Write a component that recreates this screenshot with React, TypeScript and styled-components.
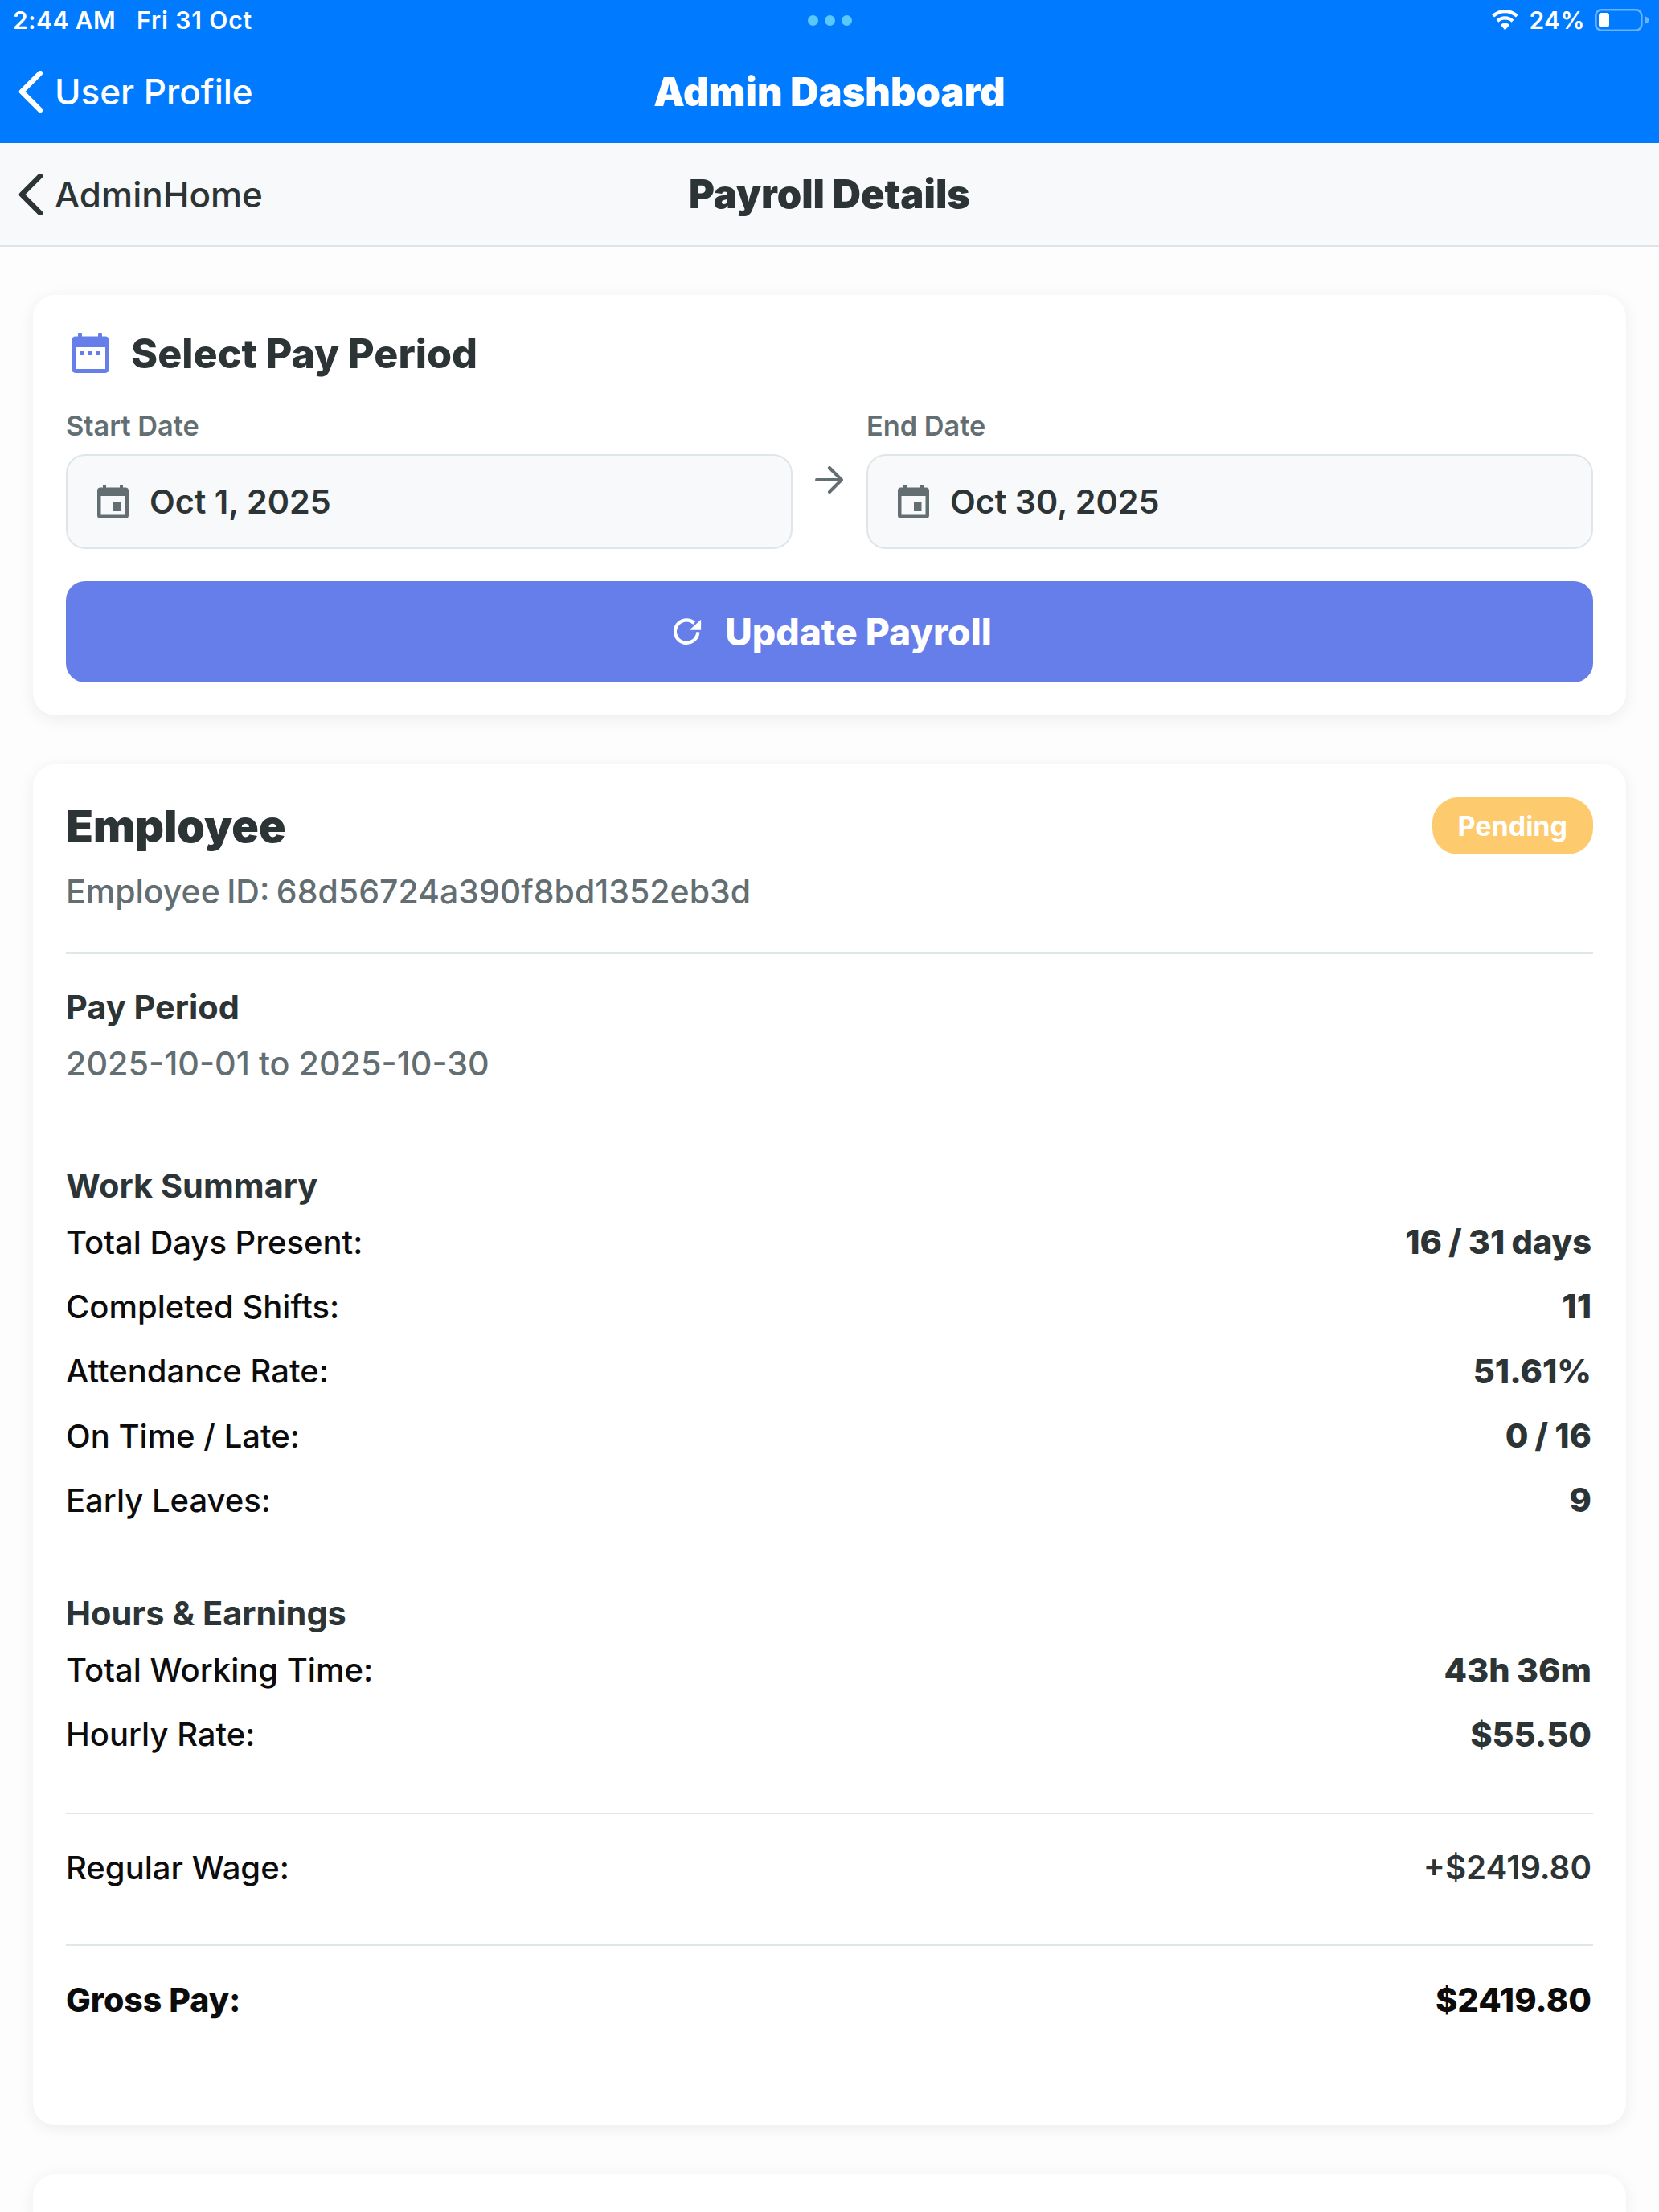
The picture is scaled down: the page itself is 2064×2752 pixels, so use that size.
import React from "react";
import styled, { createGlobalStyle } from "styled-components";

const Global = createGlobalStyle`
  html, body { margin: 0; padding: 0; background: #fdfdfd; }
  body { font-family: Inter, "Liberation Sans", sans-serif; -webkit-font-smoothing: antialiased; }
`;

const Page = styled.div`
  width: 2064px;
  height: 2752px;
  overflow: hidden;
  background: #fdfdfd;
`;

const BlueHeader = styled.header`
  background: #007aff;
  height: 178px;
  color: #fff;
`;

const StatusBar = styled.div`
  height: 50px;
  display: grid;
  grid-template-columns: 1fr auto 1fr;
  align-items: center;
  padding: 0 12px 0 16px;
  font-size: 30px;
  font-weight: 600;
  letter-spacing: 0.4px;
`;

const StatusLeft = styled.div`
  display: flex;
  gap: 26px;
`;

const StatusDate = styled.span`
  letter-spacing: 0.9px;
`;

const Dots = styled.div`
  display: flex;
  gap: 8px;
  margin-right: 4px;
`;

const Dot = styled.span`
  width: 13px;
  height: 13px;
  border-radius: 50%;
  background: #5ac8fa;
`;

const StatusRight = styled.div`
  display: flex;
  justify-content: flex-end;
  align-items: center;
  gap: 12px;
`;

const NavRow = styled.div<{ $h: number }>`
  height: ${(p) => p.$h}px;
  display: grid;
  grid-template-columns: 1fr auto 1fr;
  align-items: center;
  padding: 0 22px;
`;

const SubNav = styled.nav`
  background: #f8f9fa;
  border-bottom: 2px solid #e2e3e5;
  color: #2d3436;
`;

const Back = styled.div`
  display: flex;
  align-items: center;
  gap: 14px;
  font-size: 44px;
  font-weight: 500;
`;

const NavTitle = styled.div`
  font-size: 48.8px;
  font-weight: 900;
`;

const Content = styled.main`
  padding: 60px 41px 0;
  display: flex;
  flex-direction: column;
  gap: 61px;
`;

const Card = styled.section<{ $bottom?: number }>`
  background: #fff;
  border-radius: 28px;
  padding: 40px 41px ${(p) => p.$bottom ?? 41}px;
  box-shadow: 0 4px 20px rgba(0, 0, 0, 0.07);
`;

const CardHeader = styled.div`
  display: flex;
  align-items: center;
  gap: 26px;
  padding-left: 7px;
  height: 64px;
`;

const CardTitle = styled.h2`
  margin: 0;
  font-size: 50.2px;
  font-weight: 800;
  color: #2d3436;
`;

const DateRow = styled.div`
  display: grid;
  grid-template-columns: 1fr 92px 1fr;
  margin-top: 41px;
`;

const DateCol = styled.div`
  display: flex;
  flex-direction: column;
`;

const DateLabel = styled.label`
  height: 35px;
  line-height: 35px;
  font-size: 34.3px;
  font-weight: 600;
  color: #636e72;
`;

const DateInput = styled.div`
  margin-top: 18px;
  height: 118px;
  box-sizing: border-box;
  border: 2px solid #dfe6e9;
  border-radius: 24px;
  background: #f8f9fa;
  display: flex;
  align-items: center;
  gap: 26px;
  padding: 0 37px;
  font-size: 41.3px;
  font-weight: 600;
  color: #2d3436;
`;

const ArrowCell = styled.div`
  display: flex;
  justify-content: center;
  padding-top: 68px;
`;

const UpdateButton = styled.button`
  margin-top: 40px;
  width: 100%;
  height: 126px;
  border: none;
  border-radius: 24px;
  background: #667eea;
  color: #fff;
  display: flex;
  align-items: center;
  justify-content: center;
  gap: 28px;
  padding: 0 0 0 8px;
  font-family: inherit;
  font-size: 46.2px;
  font-weight: 800;
`;

const EmployeeTop = styled.div`
  display: flex;
  justify-content: space-between;
  align-items: flex-start;
`;

const EmployeeName = styled.h1`
  margin: 0;
  font-size: 55.4px;
  font-weight: 900;
  line-height: 74px;
  color: #2d3436;
`;

const EmployeeId = styled.div`
  margin-top: 20px;
  font-size: 41px;
  line-height: 48px;
  font-weight: 500;
  word-spacing: -2.5px;
  color: #636e72;
`;

const Badge = styled.span`
  height: 71px;
  box-sizing: border-box;
  margin-top: 1px;
  padding: 0 32px;
  border-radius: 32px;
  background: #fdcb6e;
  color: #fff;
  font-size: 34px;
  font-weight: 700;
  display: flex;
  align-items: center;
`;

const Divider = styled.hr<{ $top: number }>`
  border: none;
  height: 2px;
  background: #dfe6e9;
  margin: ${(p) => p.$top}px 0 0;
`;

const SectionTitle = styled.h3<{ $top: number }>`
  margin: ${(p) => p.$top}px 0 0;
  font-size: 41.5px;
  line-height: 48px;
  font-weight: 700;
  color: #2d3436;
`;

const PeriodValue = styled.div`
  margin-top: 22px;
  font-size: 41.3px;
  line-height: 48px;
  font-weight: 500;
  color: #636e72;
`;

const RowGroup = styled.div`
  margin-top: 6px;
`;

const Row = styled.div<{ $top?: number; $strong?: boolean }>`
  display: flex;
  justify-content: space-between;
  align-items: center;
  height: 80.3px;
  margin-top: ${(p) => p.$top ?? 0}px;
  padding-right: 2px;
  font-size: ${(p) => (p.$strong ? 41 : 40)}px;
  font-weight: ${(p) => (p.$strong ? 800 : 500)};
  color: #0c0c0c;
`;

const RowValue = styled.span<{ $strong?: boolean }>`
  font-size: 41.5px;
  font-weight: 800;
  word-spacing: -1px;
  color: ${(p) => (p.$strong ? "#0c0c0c" : "#2d3436")};
`;

const PlainValue = styled.span`
  font-size: 40.3px;
  font-weight: 600;
  color: #2d3436;
`;

const Chevron = ({ color }: { color: string }) => (
  <svg width="32" height="52" viewBox="0 0 32 52" fill="none">
    <path d="M28 3 L5 26 L28 49" stroke={color} strokeWidth="6.5" strokeLinecap="round" strokeLinejoin="round" />
  </svg>
);

const Wifi = () => (
  <svg width="35" height="26" viewBox="0 0 36 28" fill="#fff">
    <path d="M18 0C11 0 5 2.700 .5 7l3 3.300C7.200 6.700 12.300 4.500 18 4.500s10.800 2.200 14.500 5.800l3-3.300C31 2.700 25 0 18 0z" />
    <path d="M18 9c-4.600 0-8.700 1.800-11.700 4.600l3 3.300c2.200-2.100 5.300-3.400 8.700-3.400s6.500 1.300 8.700 3.400l3-3.300C26.700 10.800 22.600 9 18 9z" />
    <path d="M18 18c-2.400 0-4.500 .9-6 2.400L18 27.500l6-7.100C22.500 18.900 20.400 18 18 18z" />
  </svg>
);

const Battery = () => (
  <svg width="68" height="28" viewBox="0 0 68 28" fill="none">
    <rect x="1.300" y="1.300" width="57" height="25.400" rx="7" stroke="rgba(255,255,255,.42)" strokeWidth="2.600" />
    <rect x="5" y="5" width="13" height="18" rx="3.500" fill="#fff" />
    <path d="M63 9.500c2.800 .8 4.500 2.400 4.500 4.500s-1.700 3.700-4.500 4.500z" fill="rgba(255,255,255,.42)" />
  </svg>
);

const CalendarBadge = () => (
  <svg width="48" height="50" viewBox="0 0 48 50" fill="none">
    <rect x="8" y="0" width="5" height="8" rx="1" fill="#667eea" />
    <rect x="33" y="0" width="5" height="8" rx="1" fill="#667eea" />
    <rect x="0" y="4.500" width="47" height="45.500" rx="5" fill="#667eea" />
    <rect x="5" y="18" width="37" height="27" fill="#fff" />
    <rect x="10" y="23" width="5" height="5" fill="#667eea" />
    <rect x="20" y="23" width="5" height="5" fill="#667eea" />
    <rect x="30" y="23" width="5" height="5" fill="#667eea" />
  </svg>
);

const CalendarField = () => (
  <svg width="39" height="42" viewBox="0 0 39 42" fill="none">
    <rect x="7" y="0" width="4" height="7" rx="1" fill="#636e72" />
    <rect x="28" y="0" width="4" height="7" rx="1" fill="#636e72" />
    <rect x="0" y="3.500" width="39" height="38.500" rx="4" fill="#636e72" />
    <rect x="4.500" y="14" width="30" height="23.500" fill="#f8f9fa" />
    <rect x="20" y="22" width="9.500" height="11" fill="#636e72" />
  </svg>
);

const Arrow = () => (
  <svg width="36" height="34" viewBox="0 0 36 34" fill="none">
    <path d="M2 17 H33 M18 2 L33 17 L18 32" stroke="#636e72" strokeWidth="4" strokeLinecap="round" strokeLinejoin="round" />
  </svg>
);

const Refresh = () => (
  <svg width="36" height="36" viewBox="0 0 38 38" fill="none">
    <path d="M27 7.500 A15 15 0 1 0 32 19.500" stroke="#fff" strokeWidth="4.500" />
    <path d="M36 3 V16.500 H21 z" fill="#fff" />
  </svg>
);

type Item = { label: string; value: string };
const work: Item[] = [
  { label: "Total Days Present:", value: "16 / 31 days" },
  { label: "Completed Shifts:", value: "11" },
  { label: "Attendance Rate:", value: "51.61%" },
  { label: "On Time / Late:", value: "0 / 16" },
  { label: "Early Leaves:", value: "9" },
];
const hours: Item[] = [
  { label: "Total Working Time:", value: "43h 36m" },
  { label: "Hourly Rate:", value: "$55.50" },
];

const Rows = ({ items }: { items: Item[] }) => (
  <RowGroup>
    {items.map((r) => (
      <Row key={r.label}>
        <span>{r.label}</span>
        <RowValue>{r.value}</RowValue>
      </Row>
    ))}
  </RowGroup>
);

export default function App() {
  return (
    <Page>
      <Global />
      <BlueHeader>
        <StatusBar>
          <StatusLeft>
            <span>2:44 AM</span>
            <StatusDate>Fri 31 Oct</StatusDate>
          </StatusLeft>
          <Dots>
            <Dot />
            <Dot />
            <Dot />
          </Dots>
          <StatusRight>
            <Wifi />
            <span>24%</span>
            <Battery />
          </StatusRight>
        </StatusBar>
        <NavRow $h={128}>
          <Back>
            <Chevron color="#fff" />
            User Profile
          </Back>
          <NavTitle>Admin Dashboard</NavTitle>
        </NavRow>
      </BlueHeader>
      <SubNav>
        <NavRow $h={127}>
          <Back>
            <Chevron color="#2d3436" />
            AdminHome
          </Back>
          <NavTitle>Payroll Details</NavTitle>
        </NavRow>
      </SubNav>
      <Content>
        <Card>
          <CardHeader>
            <CalendarBadge />
            <CardTitle>Select Pay Period</CardTitle>
          </CardHeader>
          <DateRow>
            <DateCol>
              <DateLabel>Start Date</DateLabel>
              <DateInput>
                <CalendarField />
                Oct 1, 2025
              </DateInput>
            </DateCol>
            <ArrowCell>
              <Arrow />
            </ArrowCell>
            <DateCol>
              <DateLabel>End Date</DateLabel>
              <DateInput>
                <CalendarField />
                Oct 30, 2025
              </DateInput>
            </DateCol>
          </DateRow>
          <UpdateButton>
            <Refresh />
            Update Payroll
          </UpdateButton>
        </Card>
        <Card $bottom={116}>
          <EmployeeTop>
            <EmployeeName>Employee</EmployeeName>
            <Badge>Pending</Badge>
          </EmployeeTop>
          <EmployeeId>Employee ID: 68d56724a390f8bd1352eb3d</EmployeeId>
          <Divider $top={52} />
          <SectionTitle $top={42}>Pay Period</SectionTitle>
          <PeriodValue>2025-10-01 to 2025-10-30</PeriodValue>
          <SectionTitle $top={104}>Work Summary</SectionTitle>
          <Rows items={work} />
          <SectionTitle $top={77}>Hours &amp; Earnings</SectionTitle>
          <Rows items={hours} />
          <Divider $top={57} />
          <Row $top={26}>
            <span>Regular Wage:</span>
            <PlainValue>+$2419.80</PlainValue>
          </Row>
          <Divider $top={56} />
          <Row $top={26} $strong>
            <span>Gross Pay:</span>
            <RowValue $strong>$2419.80</RowValue>
          </Row>
        </Card>
        <Card />
      </Content>
    </Page>
  );
}
